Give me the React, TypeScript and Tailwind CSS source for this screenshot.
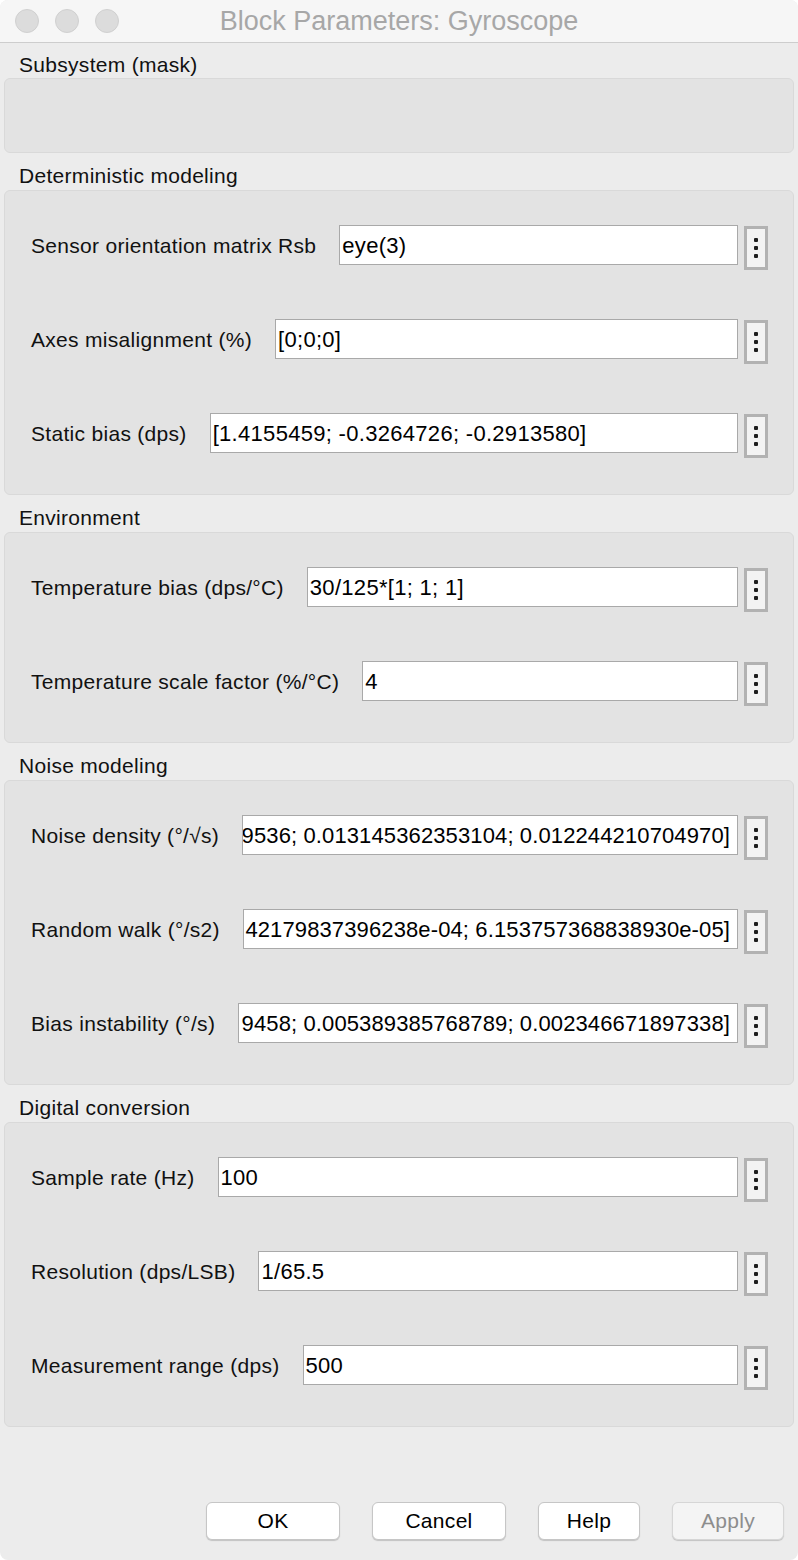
import React from "react";

type Row = { label: string; value: string; clip?: boolean };
type Section = { title: string; rows: Row[]; first?: boolean };

const sections: Section[] = [
  { title: "Subsystem (mask)", rows: [], first: true },
  {
    title: "Deterministic modeling",
    rows: [
      { label: "Sensor orientation matrix Rsb", value: "eye(3)" },
      { label: "Axes misalignment (%)", value: "[0;0;0]" },
      { label: "Static bias (dps)", value: "[1.4155459; -0.3264726; -0.2913580]" },
    ],
  },
  {
    title: "Environment",
    rows: [
      { label: "Temperature bias (dps/°C)", value: "30/125*[1; 1; 1]" },
      { label: "Temperature scale factor (%/°C)", value: "4" },
    ],
  },
  {
    title: "Noise modeling",
    rows: [
      {
        label: "Noise density (°/√s)",
        value: "9536; 0.013145362353104; 0.012244210704970]",
        clip: true,
      },
      {
        label: "Random walk (°/s2)",
        value: "42179837396238e-04; 6.153757368838930e-05]",
        clip: true,
      },
      {
        label: "Bias instability (°/s)",
        value: "9458; 0.005389385768789; 0.002346671897338]",
        clip: true,
      },
    ],
  },
  {
    title: "Digital conversion",
    rows: [
      { label: "Sample rate (Hz)", value: "100" },
      { label: "Resolution (dps/LSB)", value: "1/65.5" },
      { label: "Measurement range (dps)", value: "500" },
    ],
  },
];

function DotsButton() {
  return (
    <div className="ml-[6px] mt-[1px] w-[24px] h-[44px] shrink-0 border-[3px] border-[#b2b2b2] bg-[#f3f3f3] flex flex-col items-center justify-center gap-[4px]">
      <div className="w-[4px] h-[4px] rounded-[1px] bg-[#1e1e1e]" />
      <div className="w-[4px] h-[4px] rounded-[1px] bg-[#1e1e1e]" />
      <div className="w-[4px] h-[4px] rounded-[1px] bg-[#1e1e1e]" />
    </div>
  );
}

function ParamRow({ row }: { row: Row }) {
  return (
    <div className="flex items-start">
      <div className="h-[40px] pt-[2px] flex items-center whitespace-nowrap text-[21px] tracking-[0.3px] text-[#111]">
        {row.label}
      </div>
      <div
        className={
          row.clip
            ? "ml-[23px] flex-1 min-w-0 h-[40px] bg-white border border-[#a9a9a9] flex items-center justify-end overflow-hidden pr-[7px] whitespace-nowrap text-[22px] tracking-[0.12px] text-black"
            : "ml-[23px] flex-1 min-w-0 h-[40px] bg-white border border-[#a9a9a9] flex items-center overflow-hidden pl-[2px] whitespace-nowrap text-[22px] tracking-[0.3px] text-black"
        }
      >
        <span className="shrink-0">{row.value}</span>
      </div>
      <DotsButton />
    </div>
  );
}

function SectionBlock({ s }: { s: Section }) {
  return (
    <div className="flex flex-col">
      <div
        className={
          s.first
            ? "h-[35px] pb-[1px] pl-[15px] flex items-end"
            : "h-[37px] pb-[2px] pl-[15px] flex items-end"
        }
      >
        <span className="leading-[24px] text-[21px] tracking-[0.3px] text-[#111]">{s.title}</span>
      </div>
      {s.rows.length === 0 ? (
        <div className="h-[75px] bg-[#e3e3e3] border border-[#d9d9d9] rounded-[6px]" />
      ) : (
        <div className="bg-[#e3e3e3] border border-[#d9d9d9] rounded-[6px] pl-[26px] pr-[25px] pt-[34px] pb-[36px] flex flex-col gap-[49px]">
          {s.rows.map((r) => (
            <ParamRow key={r.label} row={r} />
          ))}
        </div>
      )}
    </div>
  );
}

function DialogButton({
  label,
  width,
  disabled,
}: {
  label: string;
  width: string;
  disabled?: boolean;
}) {
  return (
    <div
      className={
        (disabled
          ? "bg-[#f4f4f4] text-[#8d8d8d] border-[#d6d6d6] "
          : "bg-white text-black border-[#c6c6c6] ") +
        width +
        " h-[38px] rounded-[6px] border shadow-[0_1px_1px_rgba(0,0,0,0.18)] flex items-center justify-center text-[21px] tracking-[0.3px]"
      }
    >
      {label}
    </div>
  );
}

export default function App() {
  return (
    <div
      className="w-[798px] h-[1560px] bg-white"
      style={{ fontFamily: '"Liberation Sans", Arial, sans-serif' }}
    >
      <div className="w-[798px] h-[1560px] bg-[#ececec] rounded-[8px] overflow-hidden flex flex-col">
        <div className="h-[43px] shrink-0 bg-[#f6f6f6] border-b border-[#cdcdcd] flex items-center relative">
          <div className="flex items-center gap-[16px] pl-[15px]">
            <div className="w-[24px] h-[24px] rounded-full bg-[#dcdcdc] border border-[#d0d0d0]" />
            <div className="w-[24px] h-[24px] rounded-full bg-[#dcdcdc] border border-[#d0d0d0]" />
            <div className="w-[24px] h-[24px] rounded-full bg-[#dcdcdc] border border-[#d0d0d0]" />
          </div>
          <div className="absolute inset-0 flex items-center justify-center text-[27px] text-[#a7a7a7] pointer-events-none">
            Block Parameters: Gyroscope
          </div>
        </div>
        <div className="px-[4px] flex flex-col">
          {sections.map((s) => (
            <SectionBlock key={s.title} s={s} />
          ))}
        </div>
        <div className="flex-1" />
        <div className="flex justify-end gap-[32px] pr-[14px] pb-[20px]">
          <DialogButton label="OK" width="w-[134px]" />
          <DialogButton label="Cancel" width="w-[134px]" />
          <DialogButton label="Help" width="w-[102px]" />
          <DialogButton label="Apply" width="w-[112px]" disabled />
        </div>
      </div>
    </div>
  );
}
